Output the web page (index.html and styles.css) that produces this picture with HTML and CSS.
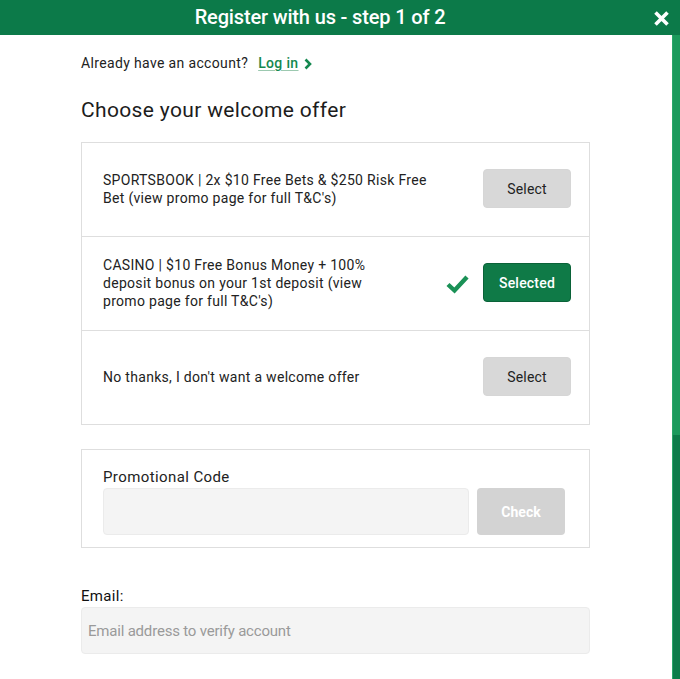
FILE: index.html
```html
<!DOCTYPE html>
<html lang="en">
<head>
<meta charset="utf-8">
<title>Register with us - step 1 of 2</title>
<link rel="stylesheet" href="styles.css">
</head>
<body>
<header class="topbar">
  <h1 class="title">Register with us - step 1 of 2</h1>
  <button class="close" aria-label="Close">
    <svg width="17" height="17" viewBox="0 0 17 17"><path d="M2.5 2.5 L14.5 14.5 M14.5 2.5 L2.5 14.5" stroke="#fff" stroke-width="3.6" stroke-linecap="butt" fill="none"/></svg>
  </button>
</header>
<div class="layout">
  <main class="modal">
    <div class="content">
      <p class="account">Already have an account? <a class="login" href="#">Log in</a>
        <svg class="chev" width="8" height="12" viewBox="0 0 8 12"><path d="M1.5 1.5 L6 6 L1.5 10.5" stroke="#14884f" stroke-width="2.6" fill="none"/></svg>
      </p>
      <h2 class="heading">Choose your welcome offer</h2>
      <div class="offers">
        <div class="offer">
          <p class="offer-text">SPORTSBOOK | 2x $10 Free Bets &amp; $250 Risk Free Bet (view promo page for full T&amp;C's)</p>
          <button class="btn">Select</button>
        </div>
        <div class="offer">
          <p class="offer-text">CASINO | $10 Free Bonus Money + 100% deposit bonus on your 1st deposit (view promo page for full T&amp;C's)</p>
          <svg class="tick" width="23" height="20" viewBox="0 0 23 20"><path d="M2 10.5 L8.5 16.5 L21 3" stroke="#1a9156" stroke-width="4.4" fill="none"/></svg>
          <button class="btn btn-selected">Selected</button>
        </div>
        <div class="offer">
          <p class="offer-text">No thanks, I don't want a welcome offer</p>
          <button class="btn">Select</button>
        </div>
      </div>
      <div class="promo">
        <label class="promo-label">Promotional Code</label>
        <div class="promo-row">
          <input class="promo-input" type="text">
          <button class="btn-check">Check</button>
        </div>
      </div>
      <label class="email-label">Email:</label>
      <input class="email-input" type="text" placeholder="Email address to verify account">
    </div>
  </main>
</div>
</body>
</html>
```
FILE: styles.css
```css
* { box-sizing: border-box; }
html, body { margin: 0; padding: 0; }
body {
  width: 680px;
  height: 679px;
  overflow: hidden;
  font-family: Roboto, "Noto Sans", sans-serif;
  color: #222;
  background: linear-gradient(to bottom, #0c7a49 0, #0c7a49 35px, #1b9a5c 35px, #1b9a5c 435px, #0d7c4a 435px);
}
.topbar {
  height: 35px;
  background: #0c7a49;
  display: grid;
  grid-template-columns: 1fr 40px;
  align-items: center;
}
.title {
  margin: 0;
  text-align: center;
  color: #fff;
  font-size: 20px;
  font-weight: 500;
  letter-spacing: -0.15px;
  line-height: 35px;
}
.close {
  background: none;
  border: 0;
  padding: 0;
  display: flex;
  align-items: center;
  justify-content: flex-start;
  padding-left: 13px;
  padding-top: 1px;
  height: 35px;
}
.layout { display: flex; }
.modal {
  width: 673px;
  height: 644px;
  background: #fff;
  border-right: 1px solid #2aa66a;
}
.content {
  padding: 18px 0 0 81px;
  width: 590px;
}
.account {
  margin: 0;
  font-size: 14px;
  line-height: 20px;
  letter-spacing: 0.35px;
  display: flex;
  align-items: center;
  color: #222;
}
.login {
  color: #14884f;
  font-weight: 500;
  margin-left: 10px;
  text-decoration: underline;
  text-decoration-color: #9cc9b0;
  text-underline-offset: 2px;
}
.chev { margin-left: 5px; margin-top: 1px; }
.heading {
  margin: 23px 0 0;
  font-size: 21px;
  font-weight: 400;
  line-height: 28px;
  letter-spacing: 0.35px;
  color: #1c1c1c;
}
.offers {
  margin-top: 18px;
  border: 1px solid #dedede;
  width: 509px;
}
.offer {
  height: 94px;
  display: flex;
  align-items: center;
  padding: 0 18px 0 21px;
  border-top: 1px solid #dedede;
}
.offer:first-child { border-top: 0; height: 93px; }
.offer-text {
  flex: 1;
  margin: -2px 50px 0 0;
  font-size: 14px;
  line-height: 18px;
  letter-spacing: 0.3px;
  color: #222;
}
.tick { margin-right: 14px; margin-top: 0; }
.btn {
  width: 88px;
  height: 39px;
  margin-top: -2px;
  border-radius: 4px;
  border: 1px solid #d6d6d6;
  background: #d8d8d8;
  color: #222;
  font-family: Roboto, sans-serif;
  font-size: 14px;
  letter-spacing: 0.2px;
  padding: 0;
}
.btn-selected {
  background: #0f7a47;
  border-color: #0a6238;
  color: #fff;
  font-weight: 500;
}
.promo {
  margin-top: 24px;
  width: 509px;
  border: 1px solid #dedede;
  padding: 18px 24px 12px 21px;
}
.promo-label {
  display: block;
  font-size: 15px;
  line-height: 18px;
  letter-spacing: 0.4px;
  color: #222;
}
.promo-row {
  display: flex;
  gap: 8px;
  margin-top: 2px;
}
.promo-input {
  flex: 1;
  height: 47px;
  border: 1px solid #ebebeb;
  border-radius: 4px;
  background: #f4f4f4;
}
.btn-check {
  width: 88px;
  height: 47px;
  border: 0;
  border-radius: 4px;
  background: #d3d3d3;
  color: #fff;
  font-family: Roboto, sans-serif;
  font-size: 14px;
  font-weight: 700;
}
.email-label {
  display: block;
  margin-top: 39px;
  font-size: 15px;
  line-height: 18px;
  letter-spacing: 0.3px;
  color: #111;
}
.email-input {
  display: block;
  margin-top: 2px;
  width: 509px;
  height: 47px;
  border: 1px solid #ebebeb;
  border-radius: 4px;
  background: #f4f4f4;
  padding: 0 6px;
  font-family: Roboto, sans-serif;
  font-size: 15px;
  letter-spacing: -0.2px;
}
.email-input::placeholder { color: #9a9a9a; }
```
